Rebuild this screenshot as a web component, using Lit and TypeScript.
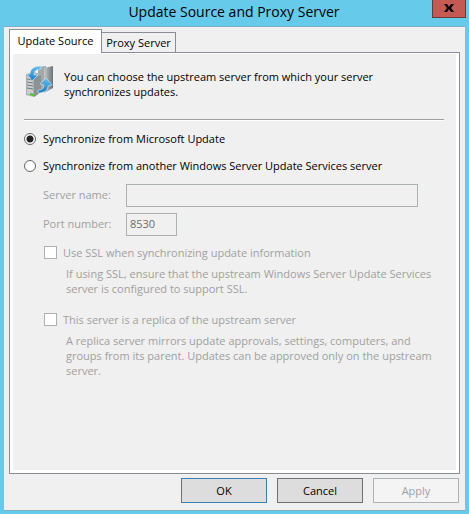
import { LitElement, html, css } from "lit";
import { customElement, state } from "lit/decorators.js";

@customElement("app-root")
export class AppRoot extends LitElement {
  @state() private source: "microsoft" | "upstream" = "microsoft";

  static styles = css`
    :host {
      display: block;
      font: 11px/15px "Open Sans", "Noto Sans", sans-serif;
      color: #000;
    }
    *, *::before, *::after { box-sizing: border-box; }
    .window {
      min-height: 100vh;
      padding: 0 4px 3px;
      background: #66caea;
      display: flex;
      flex-direction: column;
    }
    .titlebar {
      height: 26px;
      display: grid;
      grid-template-columns: 32px 1fr 34px;
      align-items: start;
      flex: none;
      margin-right: -1px;
    }
    .title {
      grid-column: 2;
      margin: 0;
      text-align: center;
      font-size: 14px;
      line-height: 24px;
      font-weight: 400;
      white-space: nowrap;
    }
    .close {
      height: 18px;
      padding: 0 0 2px;
      border: 1px solid #6b3935;
      border-top: 0;
      background: #c45a52;
      display: flex;
      align-items: center;
      justify-content: center;
    }
    .client {
      flex: 1;
      display: flex;
      flex-direction: column;
      padding: 3px 5px 7px;
      background: #f0f0f0;
      border-top: 1px solid #7fb0c4;
      border-bottom: 1px solid #7fb0c4;
    }
    .tabs {
      display: flex;
      align-items: flex-end;
      height: 23px;
      margin-bottom: -1px;
      z-index: 1;
    }
    .tab {
      font: inherit;
      color: inherit;
      white-space: nowrap;
      padding: 0;
      height: 20px;
      width: 74px;
      border: 1px solid #898c95;
      border-left: 0;
      border-bottom: 0;
      background: #f0f0f0;
      margin-bottom: 1px;
    }
    .tab.active {
      width: 93px;
      height: 24px;
      padding-bottom: 2px;
      background: #fff;
      border-left: 1px solid #898c95;
      margin-bottom: 0;
    }
    .page {
      flex: 1;
      border: 1px solid #898c95;
      background: #fff;
      padding: 1px 3px 3px;
      display: flex;
    }
    .content {
      flex: 1;
      min-width: 0;
      background: #f0f0f0;
      padding: 11px 12px 11px 11px;
    }
    .intro {
      display: flex;
      gap: 10px;
      height: 54px;
    }
    .intro svg { flex: none; }
    .intro p { margin: 4px 0 0; max-width: 320px; }
    p { margin: 0; }
    .rule {
      margin: 0 0 10px;
      border: 0;
      border-top: 1px solid #a0a0a0;
      border-bottom: 1px solid #fff;
    }
    .option {
      display: flex;
      align-items: center;
      gap: 7px;
      height: 15px;
      margin-bottom: 12px;
      white-space: nowrap;
    }
    input { margin: 0; appearance: none; flex: none; border-radius: 0; }
    .radio {
      width: 12px;
      height: 12px;
      border: 1px solid #666;
      border-radius: 50%;
      background: #fff;
    }
    .radio:checked { background: radial-gradient(circle, #222 0 3px, #fff 4px); }
    .details { padding-left: 19px; color: #a0a0a0; margin-top: -1px; }
    .field {
      display: grid;
      grid-template-columns: 83px 1fr;
      align-items: center;
      margin: 0 26px 6px 0;
    }
    .field label { padding-bottom: 3px; white-space: nowrap; }
    .box {
      font: inherit;
      color: #6d6d6d;
      height: 23px;
      width: 100%;
      border: 1px solid #abb0b3;
      background: #f0f0f0;
      padding: 0 3px 2px;
    }
    .port { width: 51px; }
    .check { gap: 6px; margin: 9px 0 6px 1px; }
    .checkbox {
      width: 13px;
      height: 13px;
      border: 1px solid #abb0b3;
      background: #fff;
    }
    .note { padding-left: 23px; margin-bottom: 16px; }
    .actions {
      display: flex;
      justify-content: flex-end;
      gap: 10px;
      padding: 4px 1px 0 0;
    }
    .button {
      width: 86px;
      height: 25px;
      font: inherit;
      color: #000;
      padding: 0;
      background: #ddd;
      border: 1px solid #707070;
    }
    .default { border-color: #3c7fb1; }
    .button:disabled { color: #a0a0a0; background: #f4f4f4; border-color: #adb2b5; }
  `;

  private icon() {
    return html`<svg width="30" height="34" viewBox="0 0 30 34" aria-hidden="true">
      <defs>
        <linearGradient id="metal"><stop offset="0" stop-color="#c4c8c9"/><stop offset="1" stop-color="#6d7376"/></linearGradient>
        <linearGradient id="blue" x2="0" y2="1"><stop offset="0" stop-color="#66bdee"/><stop offset="1" stop-color="#1c7fc4"/></linearGradient>
      </defs>
      <path d="M14 2 22 1 22 27 14 24Z" fill="#a3a9ab"/>
      <path d="M20 3 29 1V23L20 28Z" fill="url(#metal)"/>
      <path d="M2 9 9 7 17 9V27L10 32 2 30Z" fill="#a9afb0"/>
      <path d="M10 12 17 10V27L10 32Z" fill="#8b9194"/>
      <path d="M3 11 9 12V30L3 29Z" fill="#c9cdce"/>
      <path d="M3 14 9 15M3 17 9 18M3 20 9 21M3 23 9 24" stroke="#74797c" fill="none"/>
      <path d="M6 28 10 29V31L6 30Z" fill="#42ca16"/>
      <path d="M17 1C10 1 6 4 6 9L3 9 8 16 14 10 10 10C10 6 13 4 17 4Z" fill="url(#blue)" stroke="#d7effa" stroke-width=".6"/>
      <path d="M14 28C21 28 24 25 24 21L28 20 22 13 16 19 20 20C20 23 18 25 14 25Z" fill="url(#blue)" stroke="#d7effa" stroke-width=".6"/>
    </svg>`;
  }

  render() {
    const off = this.source === "microsoft";
    return html`<main class="window">
      <header class="titlebar">
        <h1 class="title">Update Source and Proxy Server</h1>
        <button class="close" aria-label="Close">
          <svg width="10" height="8" viewBox="0 0 10 8"><path d="M0 0H3L5 3 7 0H10L7 4 10 8H7L5 5 3 8H0L3 4Z"/></svg>
        </button>
      </header>
      <div class="client">
        <div class="tabs" role="tablist">
          <button class="tab active" role="tab" aria-selected="true">Update Source</button>
          <button class="tab" role="tab" aria-selected="false">Proxy Server</button>
        </div>
        <section class="page" role="tabpanel" aria-label="Update Source">
          <div class="content">
            <div class="intro">
              ${this.icon()}
              <p>You can choose the upstream server from which your server synchronizes updates.</p>
            </div>
            <hr class="rule" />
            <label class="option">
              <input class="radio" type="radio" name="source" .checked=${off} @change=${() => (this.source = "microsoft")} />
              Synchronize from Microsoft Update
            </label>
            <label class="option">
              <input class="radio" type="radio" name="source" .checked=${!off} @change=${() => (this.source = "upstream")} />
              Synchronize from another Windows Server Update Services server
            </label>
            <div class="details">
              <div class="field">
                <label for="server">Server name:</label>
                <input class="box" id="server" type="text" ?disabled=${off} />
              </div>
              <div class="field">
                <label for="port">Port number:</label>
                <input class="box port" id="port" type="text" value="8530" ?disabled=${off} />
              </div>
              <label class="option check">
                <input class="checkbox" type="checkbox" ?disabled=${off} />
                Use SSL when synchronizing update information
              </label>
              <p class="note">If using SSL, ensure that the upstream Windows Server Update Services server is configured to support SSL.</p>
              <label class="option check">
                <input class="checkbox" type="checkbox" ?disabled=${off} />
                This server is a replica of the upstream server
              </label>
              <p class="note">A replica server mirrors update approvals, settings, computers, and groups from its parent. Updates can be approved only on the upstream server.</p>
            </div>
          </div>
        </section>
        <footer class="actions">
          <button class="button default">OK</button>
          <button class="button">Cancel</button>
          <button class="button" disabled>Apply</button>
        </footer>
      </div>
    </main>`;
  }
}
